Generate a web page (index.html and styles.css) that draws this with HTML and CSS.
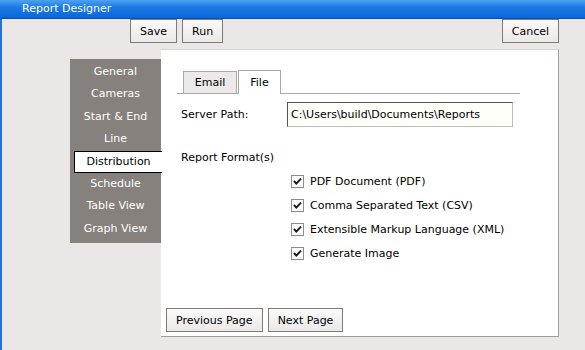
FILE: index.html
```html
<!DOCTYPE html>
<html lang="en">
<head>
    <meta charset="UTF-8">
    <meta name="viewport" content="width=device-width, initial-scale=1.0">
    <title>Report Designer</title>
    <link rel="stylesheet" href="styles.css">
</head>
<body>
    <div class="titlebar">Report Designer</div>
    <div class="window">
        <div class="toolbar">
            <button class="btn">Save</button>
            <button class="btn">Run</button>
            <button class="btn cancel">Cancel</button>
        </div>
        <div class="main">
            <ul class="nav">
                <li>General</li>
                <li>Cameras</li>
                <li>Start &amp; End</li>
                <li>Line</li>
                <li class="active">Distribution</li>
                <li>Schedule</li>
                <li>Table View</li>
                <li>Graph View</li>
            </ul>
            <div class="panel">
                <div class="tabs">
                    <div class="tab">Email</div>
                    <div class="tab selected">File</div>
                </div>
                <div class="row">
                    <span class="label">Server Path:</span>
                    <div class="input">C:\Users\build\Documents\Reports</div>
                </div>
                <div class="section">Report Format(s)</div>
                <ul class="checks">
                    <li><span class="box"><svg width="11" height="11" viewBox="0 0 11 11"><polyline points="2,5 4.3,7.6 9,2.6" fill="none" stroke="#1a1a1a" stroke-width="2"/></svg></span>PDF Document (PDF)</li>
                    <li><span class="box"><svg width="11" height="11" viewBox="0 0 11 11"><polyline points="2,5 4.3,7.6 9,2.6" fill="none" stroke="#1a1a1a" stroke-width="2"/></svg></span>Comma Separated Text (CSV)</li>
                    <li><span class="box"><svg width="11" height="11" viewBox="0 0 11 11"><polyline points="2,5 4.3,7.6 9,2.6" fill="none" stroke="#1a1a1a" stroke-width="2"/></svg></span>Extensible Markup Language (XML)</li>
                    <li><span class="box"><svg width="11" height="11" viewBox="0 0 11 11"><polyline points="2,5 4.3,7.6 9,2.6" fill="none" stroke="#1a1a1a" stroke-width="2"/></svg></span>Generate Image</li>
                </ul>
                <div class="pager">
                    <button class="btn">Previous Page</button>
                    <button class="btn">Next Page</button>
                </div>
            </div>
        </div>
    </div>
</body>
</html>
```

FILE: styles.css
```css
*{
    padding: 0;
    margin: 0;
    box-sizing: border-box;
}
html, body{
    width: 585px;
    height: 350px;
    overflow: hidden;
    font-family: "DejaVu Sans", "Liberation Sans", sans-serif;
    font-size: 11px;
    color: #000;
    background: #ebe7e6;
}
.titlebar{
    height: 19px;
    padding-left: 22px;
    line-height: 17px;
    color: #fff;
    font-size: 11px;
    background: linear-gradient(#4da2ef, #1c7ae6 40%, #0a66da);
    border-bottom: 1px solid #0050b8;
}
.window{
    height: 331px;
    border-left: 2px solid #1c74e0;
}
.toolbar{
    display: flex;
    height: 30px;
    padding-left: 128px;
    padding-right: 26px;
}
.btn{
    height: 24px;
    padding: 0 9px;
    font-family: inherit;
    font-size: 11px;
    color: #000;
    background: linear-gradient(#fafaf9, #ebe9e7);
    border: 1px solid #7d7b79;
    border-radius: 0;
}
.toolbar .btn + .btn{
    margin-left: 5px;
}
.toolbar .cancel{
    margin-left: auto !important;
}
.main{
    display: flex;
    align-items: flex-start;
}
.nav{
    list-style: none;
    width: 91px;
    margin-left: 68px;
    margin-top: 10px;
    padding: 2px 0 3px;
    background: #86817c;
    position: relative;
    z-index: 1;
}
.nav li{
    height: 22.4px;
    line-height: 22px;
    text-align: center;
    color: #fff;
    white-space: nowrap;
}
.nav li.active{
    margin-left: 4px;
    margin-right: -1px;
    color: #000;
    background: #fff;
    border: 1px solid #000;
    border-right: none;
    line-height: 20px;
}
.panel{
    display: flex;
    flex-direction: column;
    width: 398px;
    height: 288px;
    background: #fff;
    border-top: 1px solid #d9d5d3;
    border-right: 1px solid #a29e9c;
    border-bottom: 1px solid #a29e9c;
    padding: 20px 0 4px 0;
}
.tabs{
    display: flex;
    align-items: flex-end;
    margin: 0 38px 0 16px;
    padding-left: 6px;
    height: 24px;
    border-bottom: 1px solid #a8a8a8;
}
.tab{
    width: 54px;
    height: 22px;
    line-height: 21px;
    text-align: center;
    background: #ece9e8;
    border: 1px solid #a8a8a8;
    border-bottom: none;
}
.tab.selected{
    width: 43px;
    height: 24px;
    margin-left: 1px;
    margin-bottom: -1px;
    line-height: 24px;
    background: #fff;
}
.row{
    display: flex;
    align-items: center;
    margin-top: 8px;
    padding-left: 20px;
}
.label{
    width: 106px;
}
.input{
    width: 226px;
    height: 25px;
    line-height: 23px;
    padding-left: 3px;
    background: #fffffa;
    border: 1px solid #c0bdb8;
    border-top-color: #555;
    border-left-color: #555;
}
.section{
    margin-top: 24px;
    padding-left: 20px;
}
.checks{
    list-style: none;
    margin-top: 5px;
    padding-left: 130px;
}
.checks li{
    display: flex;
    align-items: center;
    height: 24px;
}
.box{
    display: flex;
    width: 13px;
    height: 13px;
    margin-right: 6px;
    border: 1px solid #8c8c8c;
    background: #fff;
}
.pager{
    display: flex;
    margin-top: auto;
    padding-left: 5px;
}
.pager .btn + .btn{
    margin-left: 5px;
}
```
